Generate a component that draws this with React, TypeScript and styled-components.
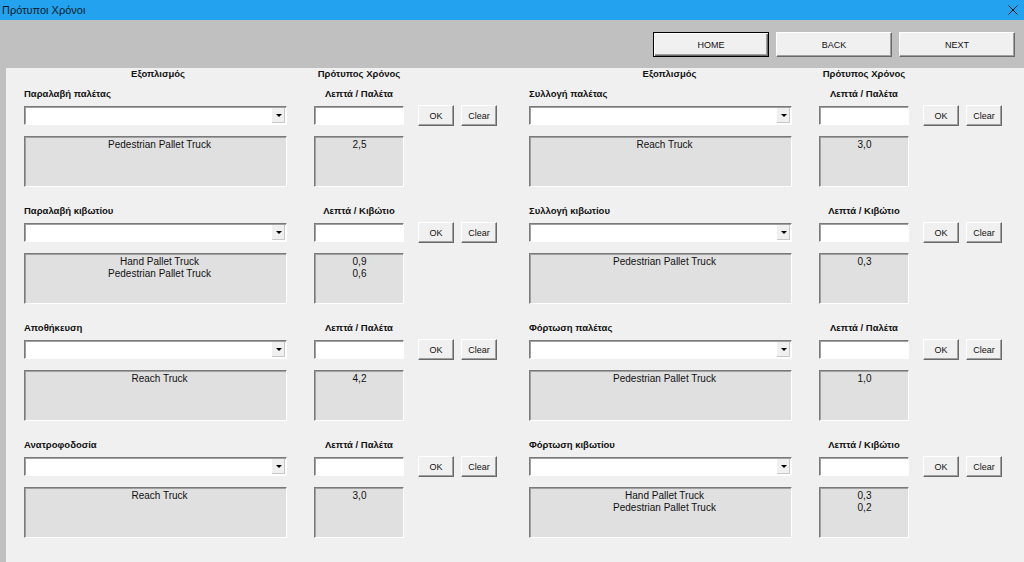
import React from 'react'
import styled, { createGlobalStyle } from 'styled-components'

const Global = createGlobalStyle`
  html, body { margin: 0; padding: 0; }
  body {
    width: 1024px;
    height: 562px;
    overflow: hidden;
    font-family: "Liberation Sans", Arial, sans-serif;
    background: #c0c0c0;
  }
`

const Window = styled.div`
  width: 1024px;
  height: 562px;
  display: flex;
  flex-direction: column;
  background: #c0c0c0;
`

const TitleBar = styled.div`
  height: 20px;
  background: #22a2ef;
  display: flex;
  align-items: center;
  justify-content: space-between;
  padding: 0 6px 0 2px;
  font-size: 11px;
  color: #0c1a26;
`

const CloseX = styled.svg`
  width: 10px;
  height: 10px;
`

const NavBar = styled.div`
  display: flex;
  justify-content: flex-end;
  gap: 7px;
  padding: 12px 9px 11px 0;
`

const NavButton = styled.div<{ $default?: boolean }>`
  width: 116px;
  height: 25px;
  box-sizing: border-box;
  display: flex;
  align-items: center;
  justify-content: center;
  font-size: 9px;
  color: #111;
  background: #f0f0f0;
  border: 1px solid;
  border-color: #fff #696969 #696969 #fff;
  box-shadow: inset -1px -1px 0 #a0a0a0;
  ${p => p.$default && `
    border: 1px solid #000;
    box-shadow: inset 1px 1px 0 #fff, inset -1px -1px 0 #696969, inset -2px -2px 0 #a0a0a0;
  `}
`

const Panel = styled.div`
  flex: 1;
  margin-left: 6px;
  background: #f0f0f0;
  padding: 0 0 0 18px;
  display: grid;
  grid-template-columns: 473px 473px;
  column-gap: 32px;
`

const Column = styled.div`
  display: flex;
  flex-direction: column;
`

const HeaderRow = styled.div`
  height: 12px;
  margin-bottom: 7px;
  display: grid;
  grid-template-columns: 263px 27px 90px;
  font-size: 9.5px;
  font-weight: bold;
  color: #111;
  align-items: center;
  line-height: 12px;
`

const Center = styled.div<{ $shift?: number }>`
  text-align: center;
  white-space: nowrap;
  padding-left: ${p => p.$shift ?? 0}px;
`

const Section = styled.div`
  height: 117px;
  display: grid;
  grid-template-columns: 263px 27px 90px 14px 36px 7px 36px;
  grid-template-rows: 13px 6px 19px 11px 51px;
`

const SectionLabel = styled.div<{ $col: number; $center?: boolean }>`
  grid-column: ${p => p.$col};
  grid-row: 1;
  font-size: 9.5px;
  font-weight: bold;
  color: #111;
  line-height: 13px;
  white-space: nowrap;
  text-align: ${p => (p.$center ? 'center' : 'left')};
`

const inset = `
  box-sizing: border-box;
  border: 1px solid;
  border-color: #7a7a7a #fff #fff #7a7a7a;
  box-shadow: inset 1px 1px 0 #a0a0a0;
`

const Combo = styled.div`
  ${inset}
  grid-column: 1;
  grid-row: 3;
  background: #fff;
  display: flex;
  justify-content: flex-end;
  padding: 1px;
`

const ComboArrow = styled.div`
  width: 13px;
  height: 100%;
  background: #f0f0f0;
  border-left: 1px solid #fff;
  box-shadow: inset -1px -1px 0 #c8c8c8;
  display: flex;
  align-items: center;
  justify-content: center;
  &:after {
    content: '';
    border-left: 3px solid transparent;
    border-right: 3px solid transparent;
    border-top: 3px solid #000;
  }
`

const TimeInput = styled.div`
  ${inset}
  grid-column: 3;
  grid-row: 3;
  background: #fff;
`

const SmallButton = styled.div<{ $col: number }>`
  grid-column: ${p => p.$col};
  grid-row: 3;
  margin-top: -1px;
  height: 21px;
  box-sizing: border-box;
  background: #f0f0f0;
  border: 1px solid;
  border-color: #fff #696969 #696969 #fff;
  box-shadow: inset -1px -1px 0 #a0a0a0;
  display: flex;
  align-items: center;
  justify-content: center;
  font-size: 9px;
  color: #111;
`

const ListBox = styled.div<{ $col: number }>`
  ${inset}
  grid-column: ${p => p.$col};
  grid-row: 5;
  background: #e0e0e0;
  padding-top: 2px;
  padding-left: ${p => (p.$col === 1 ? 8 : 1)}px;
  font-size: 10px;
  line-height: 12px;
  color: #111;
  text-align: center;
`

type Entry = { label: string; unit: string; items: string[]; times: string[] }

const left: Entry[] = [
  { label: 'Παραλαβή παλέτας', unit: 'Λεπτά / Παλέτα', items: ['Pedestrian Pallet Truck'], times: ['2,5'] },
  { label: 'Παραλαβή κιβωτίου', unit: 'Λεπτά / Κιβώτιο', items: ['Hand Pallet Truck', 'Pedestrian Pallet Truck'], times: ['0,9', '0,6'] },
  { label: 'Αποθήκευση', unit: 'Λεπτά / Παλέτα', items: ['Reach Truck'], times: ['4,2'] },
  { label: 'Ανατροφοδοσία', unit: 'Λεπτά / Παλέτα', items: ['Reach Truck'], times: ['3,0'] },
]

const right: Entry[] = [
  { label: 'Συλλογή παλέτας', unit: 'Λεπτά / Παλέτα', items: ['Reach Truck'], times: ['3,0'] },
  { label: 'Συλλογή κιβωτίου', unit: 'Λεπτά / Κιβώτιο', items: ['Pedestrian Pallet Truck'], times: ['0,3'] },
  { label: 'Φόρτωση παλέτας', unit: 'Λεπτά / Παλέτα', items: ['Pedestrian Pallet Truck'], times: ['1,0'] },
  { label: 'Φόρτωση κιβωτίου', unit: 'Λεπτά / Κιβώτιο', items: ['Hand Pallet Truck', 'Pedestrian Pallet Truck'], times: ['0,3', '0,2'] },
]

function EntrySection({ entry }: { entry: Entry }) {
  return (
    <Section>
      <SectionLabel $col={1}>{entry.label}</SectionLabel>
      <SectionLabel $col={3} $center>{entry.unit}</SectionLabel>
      <Combo>
        <ComboArrow />
      </Combo>
      <TimeInput />
      <SmallButton $col={5}>OK</SmallButton>
      <SmallButton $col={7}>Clear</SmallButton>
      <ListBox $col={1}>
        {entry.items.map(i => (
          <div key={i}>{i}</div>
        ))}
      </ListBox>
      <ListBox $col={3}>
        {entry.times.map((t, n) => (
          <div key={n}>{t}</div>
        ))}
      </ListBox>
    </Section>
  )
}

function EntryColumn({ entries, shift }: { entries: Entry[]; shift: number }) {
  return (
    <Column>
      <HeaderRow>
        <Center $shift={shift}>Εξοπλισμός</Center>
        <div />
        <Center>Πρότυπος Χρόνος</Center>
      </HeaderRow>
      {entries.map(e => (
        <EntrySection key={e.label} entry={e} />
      ))}
    </Column>
  )
}

export default function App() {
  return (
    <Window>
      <Global />
      <TitleBar>
        <span>Πρότυποι Χρόνοι</span>
        <CloseX viewBox="0 0 10 10">
          <path d="M0.5 0.5 L9.5 9.5 M9.5 0.5 L0.5 9.5" stroke="#1a1a1a" strokeWidth="1" fill="none" />
        </CloseX>
      </TitleBar>
      <NavBar>
        <NavButton $default>HOME</NavButton>
        <NavButton>BACK</NavButton>
        <NavButton>NEXT</NavButton>
      </NavBar>
      <Panel>
        <EntryColumn entries={left} shift={5} />
        <EntryColumn entries={right} shift={18} />
      </Panel>
    </Window>
  )
}
